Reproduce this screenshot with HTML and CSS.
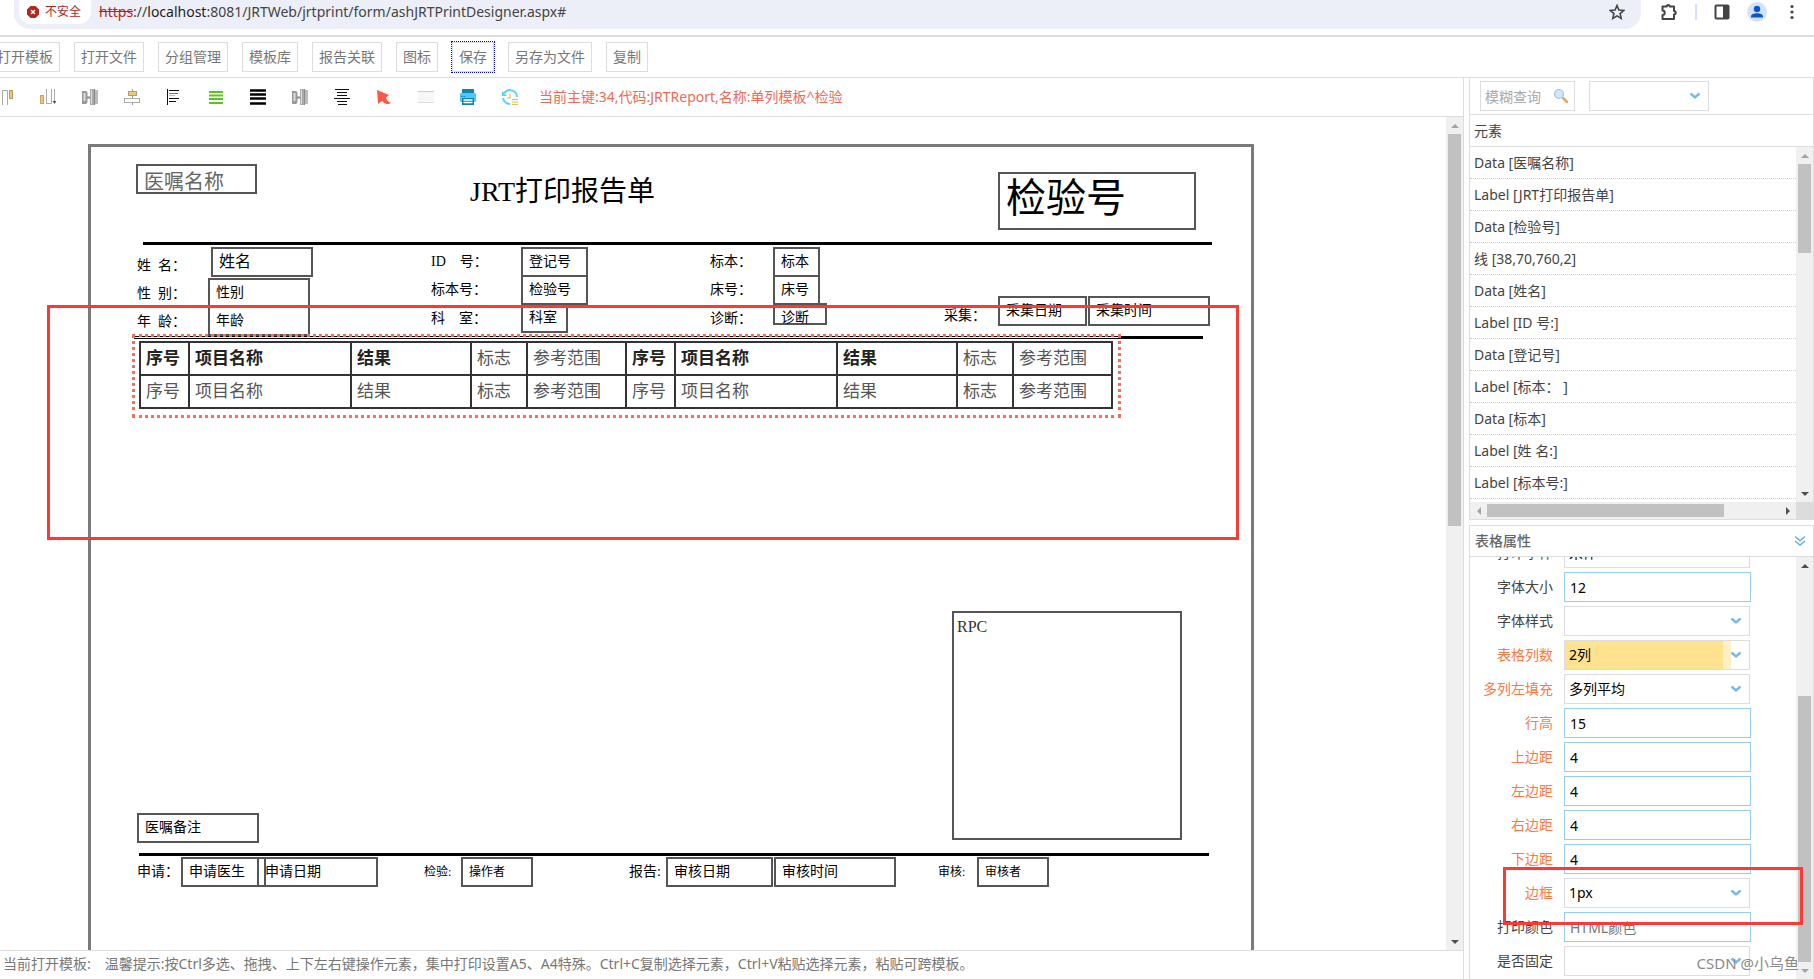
FILE: index.html
```html
<!DOCTYPE html>
<html lang="zh-CN">
<head>
<meta charset="utf-8">
<title>JRTPrintDesigner</title>
<link rel="stylesheet" href="styles.css">
</head>
<body>
<header class="browser">
  <div class="address">
    <span class="chip">
      <svg width="12" height="12" viewBox="0 0 12 12"><path d="M3.6 0h4.8L12 3.6v4.8L8.4 12H3.6L0 8.400V3.600z" fill="#b3261e"/><path d="M4 4l4 4M8 4l-4 4" stroke="#fff" stroke-width="1.500"/></svg>
      不安全
    </span>
    <span class="url"><span class="scheme">https</span>://<b class="host">localhost</b>:8081/JRTWeb/jrtprint/form/ashJRTPrintDesigner.aspx#</span>
    <svg class="star" width="16" height="16" viewBox="0 0 16 16"><path d="M8 1.500l1.900 4.500 4.900.4-3.700 3.200 1.100 4.800L8 11.900l-4.200 2.500 1.100-4.800L1.200 6.400l4.900-.4z" fill="none" stroke="#444" stroke-width="1.600"/></svg>
  </div>
  <div class="actions">
    <svg width="18" height="18" viewBox="0 0 18 18"><path d="M2.500 3.500h4.300a1.500 1.500 0 0 1 3 0h4.200v4.500a1.700 1.700 0 0 1 0 3.400v4.600H2.500v-4a2.200 2.200 0 0 0 0-4.400z" fill="none" stroke="#444" stroke-width="2" stroke-linejoin="round"/></svg>
    <span class="sep"></span>
    <svg width="16" height="16" viewBox="0 0 16 16"><rect x="1.500" y="1.500" width="13" height="13" rx="1" fill="none" stroke="#444" stroke-width="2"/><path d="M9 1h5v14H9z" fill="#444"/></svg>
    <svg width="20" height="20" viewBox="0 0 20 20"><circle cx="10" cy="10" r="10" fill="#d3e3fd"/><circle cx="10" cy="7" r="3.200" fill="#0b57d0"/><path d="M4 15.500v-1c0-2 3-3.200 6-3.200s6 1.200 6 3.200v1z" fill="#0b57d0"/></svg>
    <svg width="16" height="16" viewBox="0 0 16 16"><circle cx="8" cy="2.500" r="1.600" fill="#444"/><circle cx="8" cy="8" r="1.600" fill="#444"/><circle cx="8" cy="13.500" r="1.600" fill="#444"/></svg>
  </div>
</header>

<nav class="menu">
  <button>打开模板</button><button>打开文件</button><button>分组管理</button><button>模板库</button><button>报告关联</button><button>图标</button><button class="focused">保存</button><button>另存为文件</button><button>复制</button>
</nav>

<div class="work">
  <main class="designer">
    <div class="tools">
      <svg viewBox="0 0 16 16"><path d="M4.500 16V1.500h5V16" fill="none" stroke="#aaa"/><rect x="11.500" y="1.500" width="3" height="8" fill="#f0c674" stroke="#b99a62"/></svg>
      <svg viewBox="0 0 16 16"><rect x=".5" y="6.500" width="3" height="8" fill="#f0c674" stroke="#c9a563"/><path d="M6.500 0v14.500h5V0M14.500 0v13" fill="none" stroke="#aaa"/><path d="M12.500 12h4l-2 3z" fill="#555"/></svg>
      <svg viewBox="0 0 16 16"><use href="#i-width"/></svg>
      <svg viewBox="0 0 16 16"><path d="M8.500 0v16" stroke="#999"/><rect x="4.500" y="2.500" width="8" height="4" fill="#f0c674" stroke="#b99a62"/><rect x=".5" y="9.500" width="15" height="4" fill="#fff" stroke="#aaa"/></svg>
      <svg viewBox="0 0 16 16"><path d="M1.500 0v16M3 1.500h10M3 9.500h10M3 12.500h7" stroke="#111"/><path d="M3 4.500h9" stroke="#777"/><path d="M3 6.500h6" stroke="#bbb"/></svg>
      <svg viewBox="0 0 16 16"><path d="M1 3h14M1 6.500h14M1 10h14M1 14h14" stroke="#5ac425" stroke-width="2"/></svg>
      <svg viewBox="0 0 16 16"><path d="M0 1.500h16M0 5.500h16M0 9.500h16M0 14.500h16" stroke="#000" stroke-width="2.600"/></svg>
      <svg viewBox="0 0 16 16"><g id="i-width"><path d="M0 2h3.500q2 0 2 2v8q0 3-2 3H0z" fill="#999"/><path d="M1.500 4h2v8h-2z" fill="#ddd"/><path d="M5 7.500h4v2H5z" fill="#888"/><rect x="8" width="4" height="16" fill="#aaa"/><path d="M9.500 1v14" stroke="#ddd"/><rect x="12" y="1" width="4" height="14" fill="#bbb"/><path d="M12.500 0v16" stroke="#888"/></g></svg>
      <svg viewBox="0 0 16 16"><path d="M1 .5h14M0 9.500h16M3 3.500h10M3 6.500h10M3 12.500h10M4 15.500h9" stroke="#111" stroke-width="1.200"/></svg>
      <svg viewBox="0 0 16 16"><path d="M1 1l12 5-3 2.500q1 4 5 5.500-5 3-9-2L2 15z" fill="#fd5748"/></svg>
      <svg viewBox="0 0 16 16"><rect y="2" width="16" height="12" fill="#f7f7f7"/><path d="M0 2.500h16" stroke="#ccc"/><path d="M0 13.500h16" stroke="#ddd"/></svg>
      <svg viewBox="0 0 16 16"><path d="M2 0h12v4H2z" fill="#0e84b5"/><rect y="4" width="16" height="9" rx="1" fill="#4cc9f5"/><path d="M1 7.500h4" stroke="#0e84b5" stroke-dasharray="1.500 1"/><path d="M2 9h12v7H2z" fill="#0e84b5"/><path d="M3.500 11h9M3.500 13.500h9" stroke="#fff" stroke-width="1.300"/></svg>
      <svg viewBox="0 0 16 16"><path d="M2 4.500A7 7 0 0 1 15 8M1 9a7 7 0 0 0 7 6" fill="none" stroke="#5fd0fa" stroke-width="2"/><path d="M0 2v5h5z" fill="#5fd0fa"/><path d="M8 5v4H5M10 10.500h6M10 13h6M10 15.500h6" fill="none" stroke="#f5b942" stroke-width="1.200"/></svg>
      <span class="current">当前主键:34,代码:JRTReport,名称:单列模板^检验</span>
    </div>
    <div class="stage">
      <div class="canvas">
        <div class="node paper"></div>
        <div class="node rule rule-head"></div>
        <div class="node rule rule-result"></div>
        <div class="node rule rule-foot"></div>

        <div class="node data order-name">医嘱名称</div>
        <h1 class="node title">JRT打印报告单</h1>
        <div class="node data sample-big">检验号</div>

        <div class="node label l-name">姓&nbsp;&nbsp;名：</div>
        <div class="node label l-sex">性&nbsp;&nbsp;别：</div>
        <div class="node label l-age">年&nbsp;&nbsp;龄：</div>
        <div class="node data d-name">姓名</div>
        <div class="node data d-sex">性别</div>
        <div class="node data d-age">年龄</div>

        <div class="node label l-id">ID　号：</div>
        <div class="node label l-sample">标本号：</div>
        <div class="node label l-dept">科　室：</div>
        <div class="node data d-id">登记号</div>
        <div class="node data d-sample">检验号</div>
        <div class="node data d-dept">科室</div>

        <div class="node label l-kind">标本：</div>
        <div class="node label l-bed">床号：</div>
        <div class="node label l-diag">诊断：</div>
        <div class="node data d-kind">标本</div>
        <div class="node data d-bed">床号</div>
        <div class="node data d-diag">诊断</div>

        <div class="node label l-collect">采集：</div>
        <div class="node data d-cdate">采集日期</div>
        <div class="node data d-ctime">采集时间</div>

        <div class="node selection">
          <table class="result">
            <colgroup><col class="c1"><col class="c2"><col class="c3"><col class="c4"><col class="c5"><col class="c1"><col class="c2"><col class="c3"><col class="c4"><col class="c5"></colgroup>
            <tr><th>序号</th><th>项目名称</th><th>结果</th><td>标志</td><td>参考范围</td><th>序号</th><th>项目名称</th><th>结果</th><td>标志</td><td>参考范围</td></tr>
            <tr><td>序号</td><td>项目名称</td><td>结果</td><td>标志</td><td>参考范围</td><td>序号</td><td>项目名称</td><td>结果</td><td>标志</td><td>参考范围</td></tr>
          </table>
        </div>

        <div class="node data rpc">RPC</div>
        <div class="node data d-remark">医嘱备注</div>
        <div class="node label l-apply">申请：</div>
        <div class="node data d-doctor">申请医生</div>
        <div class="node data d-adate">申请日期</div>
        <div class="node label small l-test">检验:</div>
        <div class="node data small d-oper">操作者</div>
        <div class="node label l-report">报告:</div>
        <div class="node data d-rdate">审核日期</div>
        <div class="node data d-rtime">审核时间</div>
        <div class="node label small l-check">审核:</div>
        <div class="node data small d-checker">审核者</div>
        <div class="node mark mark-table"></div>
      </div>
      <div class="vbar vbar-stage"><i class="up dim"></i><span class="thumb"></span><i class="down"></i></div>
    </div>
    <footer class="status"><span>当前打开模板:</span><span>温馨提示:按Ctrl多选、拖拽、上下左右键操作元素，集中打印设置A5、A4特殊。Ctrl+C复制选择元素，Ctrl+V粘贴选择元素，粘贴可跨模板。</span></footer>
  </main>

  <aside class="side">
    <section class="elements">
      <div class="filter">
        <div class="search">
          <input type="text" placeholder="模糊查询" aria-label="模糊查询">
          <svg width="16" height="16" viewBox="0 0 16 16"><path d="M10 10l4 4" stroke="#e6a95a" stroke-width="2.500" stroke-linecap="round"/><circle cx="6" cy="6" r="4.500" fill="#cfe7fa" stroke="#a9c4e4" stroke-width="1.200"/></svg>
        </div>
        <div class="pick"><select aria-label="类型"><option></option></select><svg class="chev" viewBox="0 0 12 8"><path d="M1.500 1.500L6 5.500l4.500-4" fill="none" stroke="#73bbee" stroke-width="2.400"/></svg></div>
      </div>
      <div class="list-head">元素</div>
      <div class="list-wrap">
        <ul class="list">
          <li>Data [医嘱名称]</li><li>Label [JRT打印报告单]</li><li>Data [检验号]</li><li>线 [38,70,760,2]</li><li>Data [姓名]</li><li>Label [ID 号:]</li><li>Data [登记号]</li><li>Label [标本： ]</li><li>Data [标本]</li><li>Label [姓 名:]</li><li>Label [标本号:]</li>
        </ul>
        <div class="vbar vbar-list"><i class="up dim"></i><span class="thumb"></span><i class="down"></i></div>
      </div>
      <div class="hbar"><i class="left"></i><span class="track"><span class="thumb"></span></span><i class="right"></i><span class="corner"></span></div>
    </section>

    <section class="props">
      <h2 class="props-head">表格属性<svg width="12" height="12" viewBox="0 0 12 12"><path d="M1 1.500l5 4 5-4M1 6l5 4 5-4" fill="none" stroke="#5fb0ea" stroke-width="1.400"/></svg></h2>
      <div class="props-body">
        <form class="form">
          <div class="row"><label for="f0">打印字体</label><div class="pick"><select id="f0"><option>宋体</option></select><svg class="chev" viewBox="0 0 12 8"><use href="#chev"/></svg></div></div>
          <div class="row"><label for="f1">字体大小</label><input id="f1" type="text" value="12"></div>
          <div class="row"><label for="f2">字体样式</label><div class="pick"><select id="f2"><option></option></select><svg class="chev" viewBox="0 0 12 8"><path id="chev" d="M1.500 1.500L6 5.500l4.500-4" fill="none" stroke="#73bbee" stroke-width="2.400"/></svg></div></div>
          <div class="row hot"><label for="f3">表格列数</label><div class="pick"><select id="f3" class="changed"><option>2列</option></select><svg class="chev" viewBox="0 0 12 8"><use href="#chev"/></svg></div></div>
          <div class="row hot"><label for="f4">多列左填充</label><div class="pick"><select id="f4"><option>多列平均</option></select><svg class="chev" viewBox="0 0 12 8"><use href="#chev"/></svg></div></div>
          <div class="row hot"><label for="f5">行高</label><input id="f5" type="text" value="15"></div>
          <div class="row hot"><label for="f6">上边距</label><input id="f6" type="text" value="4"></div>
          <div class="row hot"><label for="f7">左边距</label><input id="f7" type="text" value="4"></div>
          <div class="row hot"><label for="f8">右边距</label><input id="f8" type="text" value="4"></div>
          <div class="row hot"><label for="f9">下边距</label><input id="f9" type="text" value="4"></div>
          <div class="row hot"><label for="f10">边框</label><div class="pick"><select id="f10"><option>1px</option></select><svg class="chev" viewBox="0 0 12 8"><use href="#chev"/></svg></div></div>
          <div class="row"><label for="f11">打印颜色</label><input id="f11" type="text" placeholder="HTML颜色"></div>
          <div class="row"><label for="f12">是否固定</label><div class="pick"><select id="f12"><option></option></select><svg class="chev" viewBox="0 0 12 8"><use href="#chev"/></svg></div></div>
        </form>
        <div class="vbar vbar-props"><i class="up"></i><span class="thumb"></span><i class="down dim"></i></div>
      </div>
      <div class="mark mark-border"></div>
      <span class="watermark">CSDN @小乌鱼</span>
    </section>
  </aside>
</div>
</body>
</html>
```
FILE: styles.css
```css
* { box-sizing: border-box; }
body {
  margin: 0;
  height: 100vh;
  display: flex;
  flex-direction: column;
  overflow: hidden;
  background: #fff;
  color: #444;
  font: 14px/20px "Noto Sans", "Noto Sans CJK SC", sans-serif;
}
button, input, select { font: inherit; border-radius: 0; }
svg { display: block; flex: none; }

/* browser bar */
.browser { display: flex; height: 35px; flex: none; padding-left: 14px; }
.address {
  flex: 1;
  height: 29px;
  display: flex;
  align-items: flex-start;
  background: #eceef8;
  border-radius: 0 0 16px 16px;
  padding: 0 16px 0 5px;
}
.chip {
  display: flex;
  align-items: center;
  gap: 6px;
  height: 24px;
  padding: 0 10px 0 8px;
  margin-right: 8px;
  border-radius: 0 0 12px 12px;
  background: #fff;
  color: #b3261e;
  font-size: 12px;
}
.url { flex: 1; line-height: 24px; }
.host { font-weight: 400; color: #1f1f1f; }
.scheme { color: #b3261e; text-decoration: line-through; }
.star { margin-top: 4px; }
.actions { display: flex; align-items: center; height: 24px; gap: 17px; padding: 0 14px 0 19px; }
.sep { width: 2px; height: 16px; background: #d3e3fd; }

/* button bar */
.menu {
  flex: none;
  height: 43px;
  display: flex;
  align-items: center;
  gap: 14px;
  margin-left: -10px;
  border-top: 2px solid #ddd;
  border-bottom: 1px solid #ddd;
}
.menu button {
  flex: none;
  height: 30px;
  padding: 0 6px;
  border: 1px solid #ddd;
  background: #fff;
  color: #777;
}
.menu .focused { outline: 1px dotted #00f; }

.work { flex: 1; min-height: 0; display: flex; gap: 5px; }
.designer { flex: 1; min-width: 0; display: flex; flex-direction: column; border-right: 1px solid #ddd; }
.tools {
  flex: none;
  height: 39px;
  display: flex;
  align-items: center;
  gap: 26px;
  margin-left: -2px;
  border-bottom: 1px solid #ddd;
}
.tools svg { width: 16px; height: 16px; }
.current { color: #ee6a55; margin-left: -5px; }
.stage { flex: 1; min-height: 0; display: flex; }
.canvas { flex: 1; position: relative; overflow: hidden; color: #000; font-family: "Liberation Serif", "Noto Sans CJK SC", serif; }
.status { flex: none; height: 29px; border-top: 1px solid #ddd; display: flex; gap: 14px; padding: 3px; color: #777; white-space: nowrap; }

/* design canvas nodes */
.node { position: absolute; margin: 0; white-space: nowrap; }
.data { height: 30px; border: 2px solid #555; padding-left: 6px; line-height: 26px; }
.label { line-height: 20px; }
.small { font-size: 12px; }
.rule { height: 3px; background: #000; }
.mark { border: 3px solid #fa3a37; pointer-events: none; }

.paper { left: 88px; top: 27px; width: 1166px; height: 1600px; border: 3px solid #7a7a7a; }
.rule-head { left: 143px; top: 125px; width: 1069px; }
.rule-result { left: 134px; top: 219px; width: 1069px; }
.rule-foot { left: 139px; top: 736px; width: 1070px; }

.order-name { left: 136px; top: 47px; width: 121px; font-size: 20px; line-height: 32px; color: #666; }
.title { left: 470px; top: 55px; font-size: 28px; line-height: 40px; font-weight: 400; }
.sample-big { left: 998px; top: 55px; width: 198px; height: 58px; font-size: 40px; line-height: 50px; }

.l-name, .l-sex, .l-age { left: 137px; }
.l-name { top: 139px; }
.l-sex { top: 167px; }
.l-age { top: 195px; }
.d-name { left: 211px; top: 130px; width: 102px; font-size: 16px; }
.d-sex, .d-age { left: 208px; width: 102px; }
.d-sex { top: 161px; }
.d-age { top: 189px; }

.l-id, .l-sample, .l-dept { left: 431px; }
.l-kind, .l-bed, .l-diag { left: 710px; }
.l-id, .l-kind { top: 135px; }
.l-sample, .l-bed { top: 163px; }
.l-dept, .l-diag { top: 192px; }
.d-id, .d-sample, .d-dept { left: 521px; width: 67px; }
.d-kind, .d-bed, .d-diag { left: 773px; width: 47px; }
.d-id, .d-kind { top: 130px; }
.d-sample, .d-bed { top: 158px; }
.d-dept, .d-diag { top: 186px; }
.data.d-dept { width: 47px; }
.data.d-diag { width: 54px; height: 22px; }

.l-collect { left: 944px; top: 189px; }
.d-cdate { left: 998px; top: 179px; width: 89px; }
.d-ctime { left: 1088px; top: 179px; width: 122px; }

.selection {
  left: 132px;
  top: 217px;
  width: 989px;
  height: 84px;
  border: 3px dotted #f2705f;
  padding: 4px;
}
.selection::before { content: ""; position: absolute; left: 0; right: 0; top: 0; height: 1px; background: #fff; }
.result { border-collapse: collapse; table-layout: fixed; width: 973px; font-size: 17px; line-height: 24px; }
.result td, .result th { height: 33px; padding: 0 0 0 5px; border: 2px solid #333; text-align: left; font-weight: 400; color: #555; }
.result th { font-weight: 700; color: #222; }
.c1 { width: 49px; }
.c2 { width: 162px; }
.c3 { width: 120px; }
.c4 { width: 56px; }
.c5 { width: 99px; }

.rpc { left: 952px; top: 494px; width: 230px; height: 229px; padding-left: 3px; font-size: 16px; line-height: 28px; color: #333; }
.d-remark { left: 137px; top: 696px; width: 122px; }
.l-apply, .l-test, .l-report, .l-check { top: 745px; }
.d-doctor, .d-adate, .d-oper, .d-rdate, .d-rtime, .d-checker { top: 740px; }
.l-apply { left: 137px; }
.d-doctor { left: 181px; width: 85px; }
.d-adate { left: 257px; width: 121px; }
.l-test { left: 424px; }
.d-oper { left: 461px; width: 72px; }
.l-report { left: 629px; }
.d-rdate { left: 666px; width: 107px; }
.d-rtime { left: 774px; width: 122px; }
.l-check { left: 938px; }
.d-checker { left: 977px; width: 72px; }
.mark-table { left: 47px; top: 188px; width: 1192px; height: 235px; }

/* scroll bars */
.vbar { width: 17px; flex: none; display: flex; flex-direction: column; align-items: center; background: #f0f0f0; }
.vbar .thumb { width: 13px; background: #c1c1c1; }
.vbar i, .hbar i { width: 17px; height: 17px; flex: none; display: grid; place-items: center; }
.vbar i::before, .hbar i::before { content: ""; border: 4px solid transparent; }
.vbar .up::before { border-top: 0; border-bottom-color: #505050; }
.vbar .down::before { border-bottom: 0; border-top-color: #505050; }
.vbar .up.dim::before { border-bottom-color: #a3a3a3; }
.vbar .down.dim::before { border-top-color: #a3a3a3; }
.vbar .down { margin-top: auto; }
.vbar-stage .thumb { height: 47%; }
.vbar-list .thumb { height: 89px; }
.vbar-props .thumb { margin-top: auto; height: 266px; }
.vbar-props .down { margin-top: 0; }
.hbar { display: flex; height: 17px; flex: none; align-items: center; background: #f0f0f0; }
.hbar .left::before { border-left: 0; border-right-color: #a3a3a3; }
.hbar .right::before { border-right: 0; border-left-color: #505050; }
.hbar .track { flex: 1; }
.hbar .thumb { display: block; width: 81%; height: 13px; background: #c1c1c1; }
.corner { width: 17px; height: 17px; background: #dcdcdc; }

/* side panels */
.side { width: 345px; flex: none; display: flex; flex-direction: column; gap: 5px; }
.elements { flex: none; height: 442px; display: flex; flex-direction: column; border: 1px solid #ddd; border-top: 0; }
.filter { height: 37px; flex: none; display: flex; align-items: center; gap: 14px; padding: 0 10px; border-bottom: 1px solid #ddd; }
.search { width: 95px; height: 30px; display: flex; align-items: center; border: 1px solid #ddd; }
.search input { flex: 1; min-width: 0; height: 28px; border: 0; padding: 0 0 0 4px; background: none; }
.search input::placeholder { color: #aaa; }
.search svg { margin-right: 5px; }
.filter .pick { width: 120px; }
.list-head { height: 32px; flex: none; line-height: 31px; padding-left: 4px; border-bottom: 1px solid #ddd; }
.list-wrap { flex: 1; min-height: 0; display: flex; }
.list { flex: 1; min-width: 0; margin: 0; padding: 0; list-style: none; overflow: hidden; }
.list li { height: 32px; line-height: 31px; padding-left: 4px; border-bottom: 1px dotted #ccc; white-space: nowrap; }

.props { flex: 1; min-height: 0; position: relative; display: flex; flex-direction: column; border: 1px solid #ddd; border-bottom: 0; }
.props-head { flex: none; height: 31px; margin: 0; padding: 0 7px 0 5px; display: flex; align-items: center; justify-content: space-between; font-size: 14px; font-weight: 500; color: #666; border-bottom: 1px solid #ddd; }
.props-body { flex: 1; min-height: 0; display: flex; }
.form { flex: 1; min-width: 0; overflow: hidden; display: flex; flex-direction: column; justify-content: flex-end; gap: 4px; padding-bottom: 3px; }
.row { flex: none; height: 30px; display: grid; grid-template-columns: 83px 187px; column-gap: 11px; align-items: center; }
.row label { text-align: right; }
.hot label { color: #ff7842; }
.row input { height: 30px; width: 100%; border: 1px solid #95cdee; padding: 0 5px; color: #000; background: #fff; }
.row input::placeholder { color: #777; }
.pick { position: relative; height: 30px; }
.row .pick { width: 186px; }
.pick select { appearance: none; width: 100%; height: 30px; border: 1px solid #ddd; padding: 0 4px; background: #fff; color: #000; }
.pick .changed { background: linear-gradient(to right, #ffe28d 158px, #fff0c8 158px, #fff0c8 166px, #fff 166px); }
.chev { position: absolute; right: 8px; top: 11px; width: 12px; height: 8px; pointer-events: none; }
.mark-border { position: absolute; left: 33px; right: 10px; bottom: 54px; height: 58px; }
.watermark { position: absolute; right: 14px; bottom: 6px; font-size: 15px; color: #8a8a8a; }
```
